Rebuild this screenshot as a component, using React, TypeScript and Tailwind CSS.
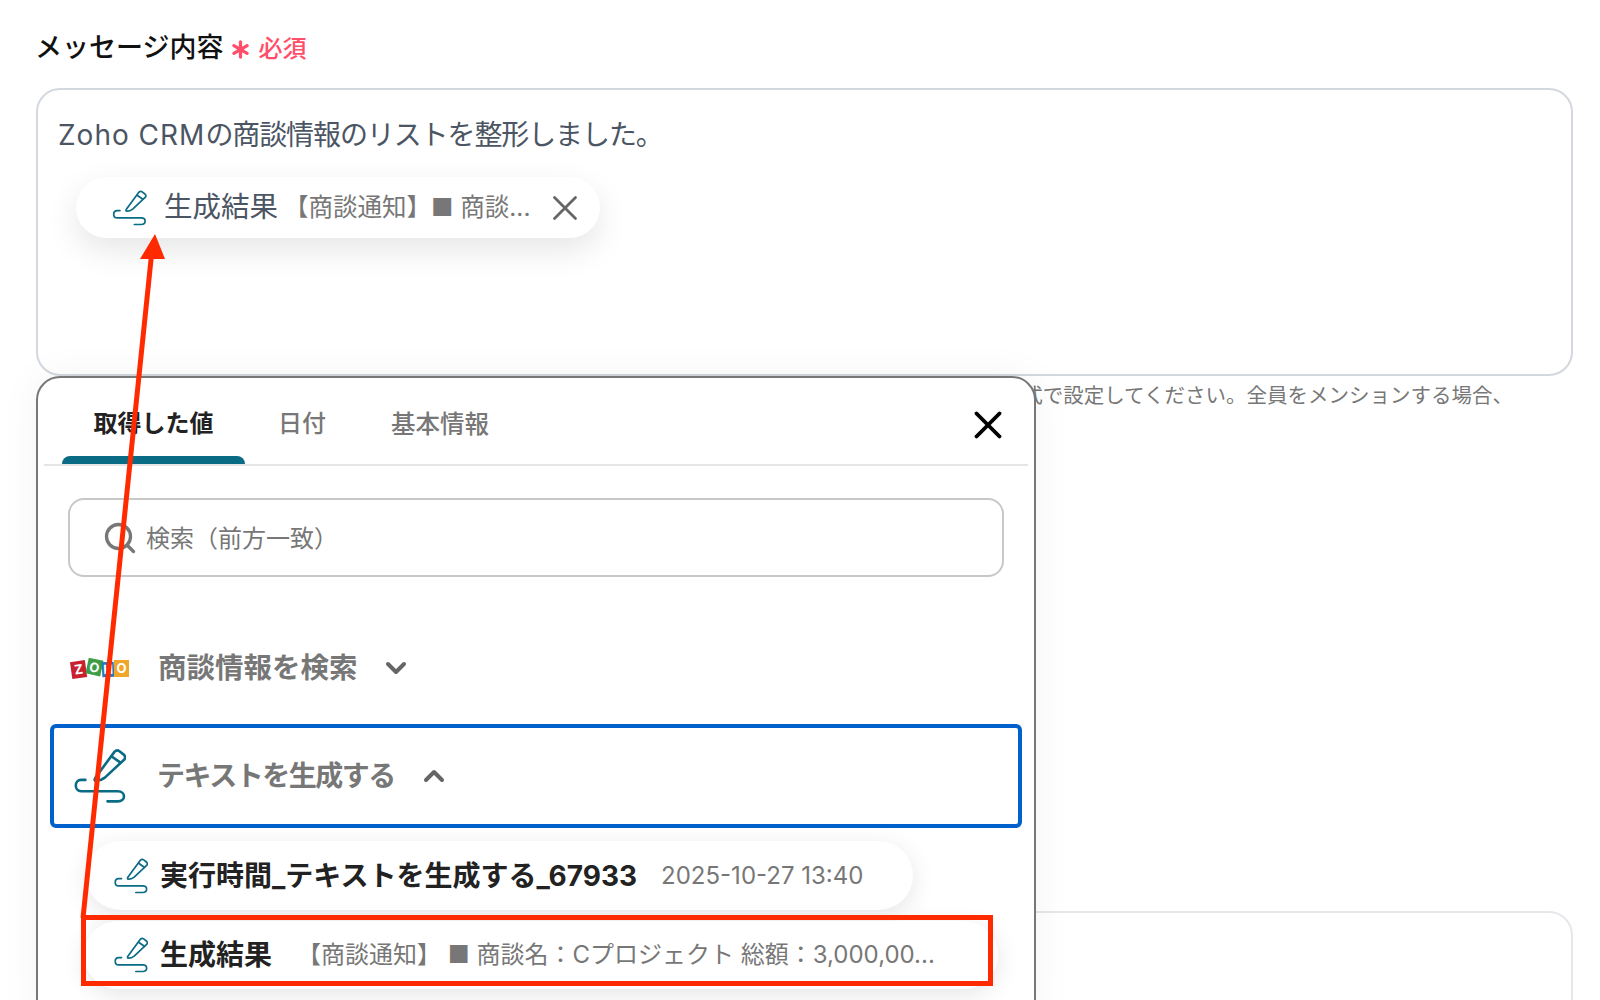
import { X, Search, ChevronDown, ChevronUp } from 'lucide-react';

// Pen with squiggle, used for the text generation action
function PenIcon({ className }: { className: string }) {
  return (
    <svg viewBox="0 0 160 170" fill="none" stroke="#0a6b85" strokeWidth="8" strokeLinecap="round" strokeLinejoin="round" className={className}>
      <path d="M66 90 L125 10 Q132 3 140 9 L154 20 Q160 26 155 34 L95 90 Q82 100 68 100 Q60 100 66 90 Z" />
      <path d="M116 25 L143 44" />
      <path d="M35 97 H22 C0 97 0 132 22 132 H135 C160 132 160 163 135 163 H103" />
    </svg>
  );
}

function ZohoLogo() {
  return (
    <svg viewBox="0 0 60 24" className="w-[60px] h-[24px] shrink-0">
      <g fontFamily="Inter, sans-serif" fontWeight="700" fontSize="13" fill="#fff" textAnchor="middle">
        <g transform="rotate(-8 9 13)">
          <rect x="1" y="5" width="15" height="17" fill="#c8202f" />
          <text x="8.5" y="18">Z</text>
        </g>
        <g transform="rotate(12 24 11)">
          <rect x="17" y="3" width="15" height="16" fill="#3f9d46" />
          <text x="24.5" y="16">O</text>
        </g>
        <g transform="rotate(-3 38 13)">
          <rect x="32" y="6" width="12" height="15" fill="#1e78c2" />
          <text x="38" y="18">H</text>
        </g>
        <rect x="44" y="4" width="15" height="17" fill="#f0a62a" />
        <text x="51.5" y="17">O</text>
      </g>
    </svg>
  );
}

export default function App() {
  return (
    <div className="relative h-[1000px] overflow-hidden bg-white pl-[36px] pr-[27px] pt-[30px] font-['Inter','Noto_Sans_CJK_JP',sans-serif]">
      {/* Field label */}
      <div className="flex items-center h-[36px]">
        <span className="text-[27px] font-medium text-[#111] -ml-[1px]">メッセージ内容</span>
        <svg viewBox="0 0 20 20" className="ml-[8px] mt-[3px] w-[19px] h-[19px]" stroke="#ff4d6a" strokeWidth="3.4" strokeLinecap="round">
          <path d="M10 2 V18 M3 6 L17 14 M17 6 L3 14" />
        </svg>
        <span className="ml-[8px] mt-[1px] text-[24px] font-medium text-[#ff4d6a]">必須</span>
      </div>

      {/* Message textarea */}
      <div className="mt-[22px] h-[288px] rounded-[24px] border-2 border-[#d3d7de] pl-[20px] pt-[25px]">
        <p className="text-[28px] leading-[40px] text-[#4b5563] whitespace-nowrap">
          <span className="tracking-[1px]">Zoho CRM</span>
          <span className="tracking-[-1.1px]">の商談情報のリストを整形しました。</span>
        </p>
        <div className="mt-[22px] ml-[18px] flex items-center h-[61px] w-[524px] rounded-full bg-white pl-[36px] shadow-[0_12px_32px_rgba(0,0,0,0.1)]">
          <PenIcon className="w-[35px] h-[36px] shrink-0" />
          <span className="ml-[17px] text-[28.5px] text-[#4b5563]">生成結果</span>
          <span className="ml-[6px] text-[24.5px] text-[#777] whitespace-nowrap">【商談通知】■ 商談...</span>
          <X className="ml-[14px] w-[42px] h-[42px] text-[#666] shrink-0" strokeWidth={1.6} />
        </div>
      </div>

      {/* Help text, mostly behind the popover */}
      <div className="flex justify-end pr-[60px] h-[40px] items-center text-[20.5px] text-[#777] whitespace-nowrap">
        式で設定してください。全員をメンションする場合、
      </div>

      {/* Next field */}
      <div className="mt-[495px] h-[200px] rounded-[24px] border-2 border-[#e5e7eb]" />

      {/* Value picker popover */}
      <div className="absolute left-[36px] top-[376px] w-[1000px] h-[640px] rounded-t-[24px] border-2 border-[#777] bg-white shadow-[0_0_40px_rgba(0,0,0,0.05)] px-[6px]">
        <div className="relative flex h-[88px] border-b-2 border-[#e5e5e5]">
          <div className="relative ml-[18px] w-[183px] flex justify-center pt-[30px]">
            <span className="text-[24px] leading-[32px] font-bold text-[#222]">取得した値</span>
            <div className="absolute bottom-0 left-0 right-0 h-[8px] rounded-t-[8px] bg-[#0a6b85]" />
          </div>
          <span className="ml-[33px] pt-[30px] text-[24px] leading-[32px] font-medium text-[#777]">日付</span>
          <span className="ml-[65px] pt-[30px] text-[24.5px] leading-[32px] font-medium text-[#777]">基本情報</span>
          <X className="absolute right-[17px] top-[24px] w-[46px] h-[46px] text-black" strokeWidth={2} />
        </div>

        <div className="mt-[32px] mx-[24px] flex items-center h-[79px] rounded-[16px] border-2 border-[#c8c8c8] pl-[32px]">
          <Search className="w-[36px] h-[36px] text-[#777]" strokeWidth={2.2} />
          <span className="ml-[8px] mt-[3px] text-[24px] text-[#777]">検索（前方一致）</span>
        </div>

        <div className="mt-[59px] ml-[26px] flex items-center h-[64px]">
          <ZohoLogo />
          <span className="ml-[28px] text-[28.5px] font-semibold text-[#777]">商談情報を検索</span>
          <ChevronDown className="ml-[22px] w-[32px] h-[32px] text-[#666]" strokeWidth={3} />
        </div>

        <div className="mt-[24px] ml-[6px] mr-[6px] flex items-center h-[104px] rounded-[6px] border-[4px] border-[#0060cc] pl-[20px]">
          <PenIcon className="w-[52px] h-[56px] shrink-0" />
          <span className="ml-[31px] text-[28px] font-semibold text-[#777] tracking-[-1.5px]">テキストを生成する</span>
          <ChevronUp className="ml-[23px] w-[32px] h-[32px] text-[#666]" strokeWidth={3} />
        </div>

        <div className="mt-[13px] ml-[42px] flex items-center h-[69px] w-[827px] rounded-full bg-white pl-[28px] shadow-[0_6px_24px_rgba(0,0,0,0.1)]">
          <PenIcon className="w-[34px] h-[36px] shrink-0" />
          <span className="ml-[12px] text-[28px] font-bold text-[#222] whitespace-nowrap">実行時間_テキストを生成する_67933</span>
          <span className="ml-[24px] text-[24px] text-[#777] whitespace-nowrap">2025-10-27 13:40</span>
        </div>

        <div className="mt-[11px] ml-[40px] flex items-center h-[68px] w-[914px] rounded-full bg-white pl-[30px] shadow-[0_6px_24px_rgba(0,0,0,0.1)]">
          <PenIcon className="w-[34px] h-[36px] shrink-0" />
          <span className="ml-[12px] text-[28px] font-bold text-[#222] whitespace-nowrap">生成結果</span>
          <span className="ml-[25px] text-[24px] text-[#777] whitespace-nowrap">【商談通知】 ■ 商談名：Cプロジェクト 総額：3,000,00...</span>
        </div>
      </div>

      {/* Red annotation: box around the row */}
      <div className="absolute left-[81px] top-[915px] w-[912px] h-[71px] border-[5px] border-[#ff2a00]" />

      {/* Red annotation: arrow up to the chip */}
      <svg className="absolute left-0 top-0 w-[1600px] h-[1000px] pointer-events-none" viewBox="0 0 1600 1000" fill="none">
        <path d="M83 918 L152 250" stroke="#ff2a00" strokeWidth="5" />
        <path d="M155 234 L165 259 L140 259 Z" fill="#ff2a00" />
      </svg>
    </div>
  );
}
